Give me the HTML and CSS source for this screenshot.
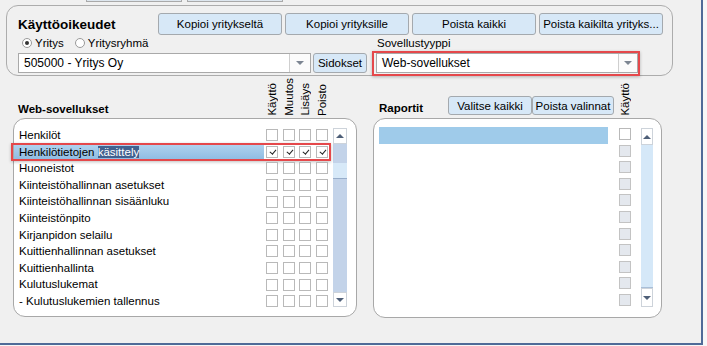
FILE: index.html
```html
<!DOCTYPE html>
<html lang="fi">
<head>
    <meta charset="UTF-8">
    <title>Käyttöoikeudet</title>
    <link rel="stylesheet" href="styles.css">
</head>
<body>
<div id="frame">
    <div class="prev-strip">
        <span></span>
        <span></span>
    </div>

    <div class="panel">
        <div class="panel-top">
            <h1 class="panel-title">Käyttöoikeudet</h1>
            <button class="btn btn-wide">Kopioi yritykseltä</button>
            <button class="btn btn-wide">Kopioi yrityksille</button>
            <button class="btn btn-wide">Poista kaikki</button>
            <button class="btn btn-wide">Poista kaikilta yrityks...</button>
        </div>
        <div class="panel-grid">
            <div class="radios">
                <label class="radio"><span class="dot checked"></span>Yritys</label>
                <label class="radio"><span class="dot"></span>Yritysryhmä</label>
            </div>
            <div class="field-label">Sovellustyyppi</div>
            <div class="company-row">
                <div class="select select-company">
                    <span class="select-text">505000 - Yritys Oy</span>
                    <span class="select-arrow"></span>
                </div>
                <button class="btn btn-links">Sidokset</button>
            </div>
            <div class="marked">
                <div class="select select-type">
                    <span class="select-text">Web-sovellukset</span>
                    <span class="select-arrow"></span>
                </div>
            </div>
        </div>
    </div>

    <div class="lists">
        <div class="col col-apps">
            <div class="col-head">
                <div class="head-label">Web-sovellukset</div>
                <div class="head-cell"><span>Käyttö</span></div>
                <div class="head-cell"><span>Muutos</span></div>
                <div class="head-cell"><span>Lisäys</span></div>
                <div class="head-cell"><span>Poisto</span></div>
            </div>
            <div class="box box-apps">
                <ul id="app-list">
                    <li><span class="name">Henkilöt</span><i class="cb"></i><i class="cb"></i><i class="cb"></i><i class="cb"></i></li>
                    <li class="selected"><span class="name">Henkilötietojen <em>käsittely</em></span><i class="cb on"></i><i class="cb on"></i><i class="cb on"></i><i class="cb on"></i></li>
                    <li><span class="name">Huoneistot</span><i class="cb"></i><i class="cb"></i><i class="cb"></i><i class="cb"></i></li>
                    <li><span class="name">Kiinteistöhallinnan asetukset</span><i class="cb"></i><i class="cb"></i><i class="cb"></i><i class="cb"></i></li>
                    <li><span class="name">Kiinteistöhallinnan sisäänluku</span><i class="cb"></i><i class="cb"></i><i class="cb"></i><i class="cb"></i></li>
                    <li><span class="name">Kiinteistönpito</span><i class="cb"></i><i class="cb"></i><i class="cb"></i><i class="cb"></i></li>
                    <li><span class="name">Kirjanpidon selailu</span><i class="cb"></i><i class="cb"></i><i class="cb"></i><i class="cb"></i></li>
                    <li><span class="name">Kuittienhallinnan asetukset</span><i class="cb"></i><i class="cb"></i><i class="cb"></i><i class="cb"></i></li>
                    <li><span class="name">Kuittienhallinta</span><i class="cb"></i><i class="cb"></i><i class="cb"></i><i class="cb"></i></li>
                    <li><span class="name">Kulutuslukemat</span><i class="cb"></i><i class="cb"></i><i class="cb"></i><i class="cb"></i></li>
                    <li><span class="name">- Kulutuslukemien tallennus</span><i class="cb"></i><i class="cb"></i><i class="cb"></i><i class="cb"></i></li>
                </ul>
                <div class="scroll scroll-apps">
                    <span class="sc-btn sc-up"></span>
                    <span class="sc-track sc-top"></span>
                    <span class="sc-thumb"></span>
                    <span class="sc-track sc-rest"></span>
                    <span class="sc-btn sc-down"></span>
                </div>
            </div>
        </div>

        <div class="col col-reports">
            <div class="col-head">
                <div class="head-label head-reports">Raportit</div>
                <button class="btn btn-small btn-select">Valitse kaikki</button>
                <button class="btn btn-small btn-clear">Poista valinnat</button>
                <div class="head-cell head-use"><span>Käyttö</span></div>
            </div>
            <div class="box box-reports">
                <div class="report-list">
                    <div class="report-row selected"></div>
                </div>
                <div class="report-checks">
                    <i class="cb"></i>
                    <i class="cb off"></i>
                    <i class="cb off"></i>
                    <i class="cb off"></i>
                    <i class="cb off"></i>
                    <i class="cb off"></i>
                    <i class="cb off"></i>
                    <i class="cb off"></i>
                    <i class="cb off"></i>
                    <i class="cb off"></i>
                    <i class="cb off"></i>
                </div>
                <div class="scroll scroll-reports">
                    <span class="sc-btn sc-up"></span>
                    <span class="sc-track sc-full"></span>
                    <span class="sc-btn sc-down"></span>
                </div>
            </div>
        </div>
    </div>
</div>
</body>
</html>
```

FILE: styles.css
```css
* {
    margin: 0;
    padding: 0;
    box-sizing: border-box;
    list-style: none;
}

body {
    background-color: #f7f7f7;
    font-family: "Liberation Sans", Arial, sans-serif;
    font-size: 11.5px;
    color: #000;
}

#frame {
    width: 703px;
    height: 345px;
    background-color: #f0f0f0;
    border-right: 2px solid #4f6b98;
    border-bottom: 2px solid #4f6b98;
}

/* bottoms of the buttons of the row above */
.prev-strip {
    display: flex;
    gap: 5px;
    height: 2px;
    padding-left: 86px;
}

.prev-strip span {
    width: 96px;
    height: 2px;
    background-color: #dde6ee;
    border: 1px solid #a9a9a9;
    border-top: none;
}

/* top panel */
.panel {
    width: 667px;
    height: 71px;
    margin: 3px 0 0 6px;
    padding: 7px 0 0 11px;
    border: 1px solid #acacac;
    border-radius: 12px;
}

.panel-top {
    display: flex;
    align-items: center;
    gap: 3px;
    height: 22px;
}

.panel-title {
    width: 137px;
    font-size: 13.5px;
    font-weight: bold;
}

.btn {
    height: 22px;
    font-family: inherit;
    font-size: 11.5px;
    color: #000;
    background-color: #d7e8f7;
    border: 1px solid #a4a9ae;
    border-radius: 3px;
}

.btn-wide {
    width: 124px;
}

.panel-grid {
    display: grid;
    grid-template-columns: 354px 280px;
    grid-template-rows: 16px 25px;
}

.radios {
    display: flex;
    align-items: center;
    padding-left: 4px;
}

.radio {
    display: flex;
    align-items: center;
    margin-right: 11px;
}

.dot {
    position: relative;
    width: 10px;
    height: 10px;
    margin-right: 3px;
    border: 1px solid #9a9a9a;
    border-radius: 50%;
    background-color: #fff;
}

.dot.checked::after {
    content: "";
    position: absolute;
    left: 2px;
    top: 2px;
    width: 4px;
    height: 4px;
    border-radius: 50%;
    background-color: #333;
}

.field-label {
    display: flex;
    align-items: center;
    padding-left: 5px;
}

.company-row {
    display: flex;
    align-items: center;
    gap: 2px;
    padding-bottom: 2px;
}

.select {
    display: flex;
    height: 20px;
    background-color: #fff;
    border: 1px solid #a9a9a9;
}

.select-text {
    flex: 1;
    padding-left: 5px;
    line-height: 18px;
    font-size: 12px;
}

.select-arrow {
    position: relative;
    width: 21px;
    border-left: 1px solid #cfcfcf;
    background-color: #fbfbfb;
}

.select-arrow::after {
    content: "";
    position: absolute;
    left: 6px;
    top: 7px;
    border-left: 4px solid transparent;
    border-right: 4px solid transparent;
    border-top: 4px solid #7c8592;
}

.select-company {
    width: 293px;
}

.btn-links {
    width: 54px;
    height: 20px;
}

.marked {
    width: 268px;
    height: 25px;
    padding: 0 0 1px 2px;
    border: 2px solid #e5484b;
    box-shadow: 0 1px 3px rgba(0, 0, 0, 0.25);
}

.select-type {
    width: 262px;
}

.select-type .select-arrow {
    width: 19px;
}

.select-type .select-arrow::after {
    left: 5px;
}

/* lower lists */
.lists {
    display: flex;
    margin-top: 4px;
}

.col-apps {
    width: 344px;
    margin-left: 13px;
}

.col-reports {
    width: 289px;
    margin-left: 16px;
}

.col-head {
    display: flex;
    align-items: flex-end;
    height: 38px;
    padding-bottom: 2px;
}

.head-label {
    width: 251px;
    padding-left: 5px;
    line-height: 14px;
    font-weight: bold;
}

.head-cell {
    display: flex;
    justify-content: center;
    width: 16.5px;
}

.head-cell span {
    writing-mode: vertical-rl;
    transform: rotate(180deg);
    line-height: 12px;
}

.head-reports {
    width: 75px;
    padding-left: 6px;
    margin-bottom: 1px;
}

.btn-small {
    height: 19px;
    margin-bottom: 1px;
    border-radius: 3px;
}

.btn-select {
    width: 84px;
}

.btn-clear {
    width: 82px;
}

.head-use {
    width: 14px;
    margin-left: 4px;
}

.box {
    display: flex;
    align-items: flex-start;
    background-color: #fff;
    border: 1px solid #a8a8a8;
    border-radius: 12px;
}

.box-apps {
    height: 199px;
    padding: 8px 9px 0 0;
}

#app-list {
    width: 316px;
    margin-right: 3px;
}

#app-list li {
    position: relative;
    display: flex;
    align-items: center;
    height: 16.6px;
}

#app-list .name {
    width: 250px;
    height: 100%;
    padding-left: 5px;
    line-height: 16.6px;
    white-space: nowrap;
}

#app-list .cb {
    margin: 0 2.25px;
}

#app-list li.selected .name {
    background: linear-gradient(#b1d3ef, #8ebbe2);
}

#app-list li.selected em {
    font-style: normal;
    color: #fff;
    background-color: #41618f;
}

#app-list li.selected::after {
    content: "";
    position: absolute;
    left: -3px;
    right: -1px;
    top: -1px;
    bottom: -1px;
    border: 2px solid #e5484b;
    box-shadow: 0 1px 3px rgba(0, 0, 0, 0.25);
}

.cb {
    position: relative;
    display: block;
    width: 12px;
    height: 12px;
    background-color: #fff;
    border: 1px solid #b9b9b9;
}

.cb.on::after {
    content: "";
    position: absolute;
    left: 4px;
    top: 1.5px;
    width: 2.5px;
    height: 5px;
    border-right: 1.6px solid #222;
    border-bottom: 1.6px solid #222;
    transform: rotate(40deg);
}

.cb.off {
    background-color: #e4e8ee;
    border-color: #c3c3c3;
}

.scroll {
    display: flex;
    flex-direction: column;
    margin-top: 1px;
    height: 179px;
}

.scroll-apps {
    width: 14px;
}

.sc-btn {
    position: relative;
    display: block;
    background-color: #fff;
    border: 1px solid #cdd3da;
}

.sc-up::after,
.sc-down::after {
    content: "";
    position: absolute;
    left: 50%;
    top: 50%;
    margin: -2px 0 0 -4px;
    border-left: 4px solid transparent;
    border-right: 4px solid transparent;
}

.sc-up::after {
    border-bottom: 4px solid #4e5f78;
}

.sc-down::after {
    border-top: 4px solid #4e5f78;
}

.scroll-apps .sc-up {
    height: 16px;
}

.scroll-apps .sc-down {
    height: 15px;
}

.sc-track {
    display: block;
    background-color: #c3d3e9;
}

.sc-top {
    height: 19px;
}

.sc-thumb {
    display: block;
    height: 16px;
    background-color: #d7e9f8;
    border-bottom: 1px solid #98aecb;
}

.sc-rest {
    flex: 1;
}

.box-reports {
    height: 200px;
    padding: 8px 8px 0 5px;
}

.report-list {
    width: 229px;
}

.report-row {
    height: 17px;
}

.report-row.selected {
    background-color: #9fcbea;
}

.report-checks {
    display: flex;
    flex-direction: column;
    align-items: center;
    width: 14px;
    margin-left: 10px;
}

.report-checks .cb {
    margin: 1px 0 3.6px;
}

.scroll-reports {
    width: 12px;
    margin-left: 9px;
}

.scroll-reports .sc-up {
    height: 17px;
}

.scroll-reports .sc-down {
    height: 19px;
}

.sc-full {
    flex: 1;
    background-color: #d5e8f8;
    border-bottom: 1px solid #a9bfd8;
}
```
